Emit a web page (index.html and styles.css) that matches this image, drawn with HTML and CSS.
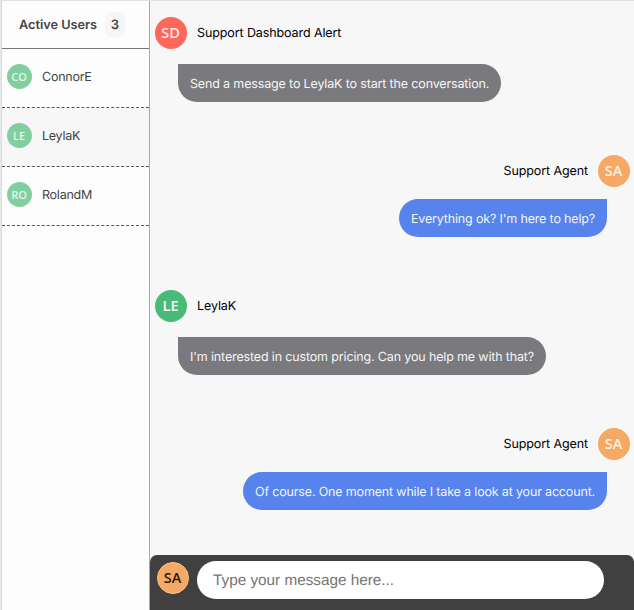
FILE: index.html
```html
<!DOCTYPE html>
<html lang="en">
<head>
<meta charset="utf-8">
<title>Support Dashboard</title>
<link rel="stylesheet" href="styles.css">
</head>
<body>
<div class="app">
  <aside class="sidebar">
    <header class="sidebar-header"><h1 class="title">Active Users</h1><span class="count">3</span></header>
    <ul class="users">
      <li class="user"><span class="avatar small">CO</span><span class="user-name">ConnorE</span></li>
      <li class="user selected"><span class="avatar small">LE</span><span class="user-name">LeylaK</span></li>
      <li class="user"><span class="avatar small">RO</span><span class="user-name">RolandM</span></li>
    </ul>
  </aside>
  <main class="chat">
    <div class="messages">
      <section class="message">
        <div class="sender"><span class="avatar red">SD</span><span class="name">Support Dashboard Alert</span></div>
        <p class="bubble">Send a message to LeylaK to start the conversation.</p>
      </section>
      <section class="message own">
        <div class="sender"><span class="avatar orange">SA</span><span class="name">Support Agent</span></div>
        <p class="bubble">Everything ok? I'm here to help?</p>
      </section>
      <section class="message">
        <div class="sender"><span class="avatar green">LE</span><span class="name">LeylaK</span></div>
        <p class="bubble">I'm interested in custom pricing. Can you help me with that?</p>
      </section>
      <section class="message own">
        <div class="sender"><span class="avatar orange">SA</span><span class="name">Support Agent</span></div>
        <p class="bubble">Of course. One moment while I take a look at your account.</p>
      </section>
    </div>
    <form class="composer">
      <span class="avatar orange me">SA</span>
      <input class="field" type="text" placeholder="Type your message here...">
    </form>
  </main>
</div>
</body>
</html>
```
FILE: styles.css
```css
* { box-sizing: border-box; }
body { margin: 0; font: 12.5px/20px Inter, "Liberation Sans", sans-serif; color: #000; background: #f7f7f7; text-rendering: geometricPrecision; }
.app { display: flex; height: 610px; overflow: hidden; border-top: 1px solid #e0e0e0; border-left: 1px solid #e8e8e8; }
.sidebar { width: 149px; flex: none; background: #fdfdfd; border-left: 1px solid #dcdcdc; border-right: 1px solid #a8a8a8; }
.sidebar-header { height: 48px; display: flex; align-items: center; padding-left: 17px; border-bottom: 1px solid #777; color: #444; }
.title { flex: none; width: 78px; margin: 0; padding-top: 2px; font-size: 12.7px; font-weight: 600; white-space: nowrap; }
.count { width: 20px; height: 25px; margin-left: 8px; border-radius: 6px; background: #f6f6f6; font-size: 13px; font-weight: 600; line-height: 26px; text-align: center; }
.users { list-style: none; margin: 0; padding: 0; }
.user { height: 59px; display: flex; align-items: center; padding: 0 0 3px 5px; border-bottom: 1px dashed #555; color: #444; }
.selected { background: #f7f7f7; }
.user-name { margin-left: 10px; padding-top: 2px; letter-spacing: -0.25px; }
.avatar { flex: none; width: 32px; height: 32px; border-radius: 50%; display: flex; align-items: center; justify-content: center; color: #fff; font: 600 14.5px/34px "Open Sans", "Noto Sans", sans-serif; padding-right: 1px; text-rendering: auto; }
.small { width: 25px; height: 25px; background: #81cf9f; color: #e5f5eb; font-size: 11px; line-height: 25px; }
.red { background: #ff665c; color: #ffe8e5; }
.orange { background: #f4a964; color: #fff0df; }
.green { background: #48bb78; }
.chat { flex: 1; min-width: 0; display: flex; flex-direction: column; }
.messages { flex: 1; min-height: 0; padding-top: 16px; }
.message { height: 137.5px; padding-left: 5px; }
.message.own { height: 135.5px; padding: 0 4px 0 0; }
.sender { display: flex; align-items: center; }
.own .sender { flex-direction: row-reverse; }
.name { margin: 0 10px; padding-top: 2px; letter-spacing: -0.1px; }
.bubble { width: fit-content; height: 38px; margin: 15px 0 0 23px; padding: 0 12px; border-radius: 0 19px 19px 19px; background: #7a797e; color: #f6f6f6; letter-spacing: -0.15px; line-height: 41px; white-space: nowrap; }
.own .bubble { margin: 12.9px 23px 0 auto; border-radius: 19px 0 19px 19px; background: #5783ec; color: #f1f5fe; letter-spacing: -0.165px; line-height: 41px; }
.composer { flex: none; height: 55px; display: flex; padding: 6px 30px 0 7px; border-radius: 7px 7px 0 0; background: #404040; }
.me { color: #2c1b0c; margin-top: 1px; border: 1px solid #ffc182; }
.field { width: 407px; height: 38px; margin-left: 8px; padding: 1px 16px 0; border: 0; border-radius: 19px; outline: 0; background: #fff; font: 15.3px "Liberation Sans", Arial, sans-serif; text-rendering: geometricPrecision; }
.field::placeholder { color: #757575; opacity: 1; }
```
